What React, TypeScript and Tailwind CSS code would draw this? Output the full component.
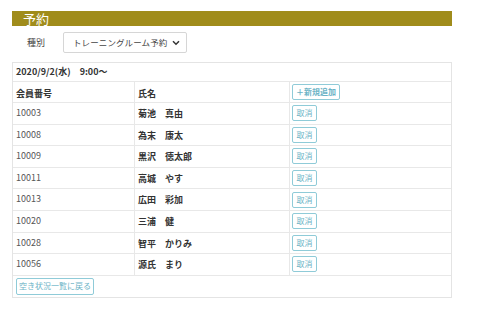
import React from 'react';

const members = [
  { id: '10003', name: '菊池　真由' },
  { id: '10008', name: '為末　康太' },
  { id: '10009', name: '黒沢　徳太郎' },
  { id: '10011', name: '高城　やす' },
  { id: '10013', name: '広田　彩加' },
  { id: '10020', name: '三浦　健' },
  { id: '10028', name: '智平　かりみ' },
  { id: '10056', name: '源氏　まり' },
];

const font = { fontFamily: '"Noto Sans CJK JP", "Noto Sans", sans-serif' };

const SmallButton: React.FC<{ label: string; width: string }> = ({ label, width }) => (
  <button
    className={`${width} h-4 flex items-center justify-center rounded-[2px] border border-[#8fcbd8] bg-white text-[8px] leading-none text-[#6cb3c6]`}
  >
    {label}
  </button>
);

export default function App() {
  return (
    <div className="w-[483px] h-[316px] bg-white text-[#333]" style={font}>
      <div className="pt-[11px] px-3">
        {/* title bar */}
        <div className="h-[15px] w-[440px] bg-[#a08c1b] pl-[11px] flex items-center">
          <span className="text-[13px] leading-none text-white">予約</span>
        </div>

        {/* type select */}
        <div className="flex items-center mt-[6px] h-[21px]">
          <span className="w-[51px] pl-[15px] text-[9px] text-[#444]">種別</span>
          <div className="w-[124px] h-[21px] flex items-center border border-[#d6d6d6] rounded-[2px] pl-[9px] pr-[6px]">
            <span className="text-[8.5px] text-[#444] tracking-[0.1px]">トレーニングルーム予約</span>
            <svg className="ml-auto" width="8" height="6" viewBox="0 0 8 6">
              <path d="M1 1.2 L4 4.2 L7 1.2" fill="none" stroke="#333" strokeWidth="1.5" />
            </svg>
          </div>
        </div>

        {/* table */}
        <div className="mt-[9px] w-[440px] border border-[#e4e4e4]">
          <div className="h-[19px] flex items-center pl-[3px] text-[9px] font-bold border-b border-[#e8e8e8]">
            2020/9/2(水)　9:00～
          </div>
          <div className="grid grid-cols-[122px_155px_161px] h-[21px] border-b border-[#e8e8e8] text-[9px] font-bold">
            <div className="flex items-center pl-[3px] border-r border-[#e8e8e8] pt-[3px]">会員番号</div>
            <div className="flex items-center pl-[3px] border-r border-[#e8e8e8] pt-[3px]">氏名</div>
            <div className="flex items-center pl-[2px]">
              <SmallButton label="＋新規追加" width="w-[48px]" />
            </div>
          </div>
          {members.map(m => (
            <div key={m.id} className="grid grid-cols-[122px_155px_161px] h-[21.6px] border-b border-[#e8e8e8] text-[9px]">
              <div className="flex items-center pl-[3px] border-r border-[#e8e8e8] text-[#555] pb-[1px]">{m.id}</div>
              <div className="flex items-center pl-[3px] border-r border-[#e8e8e8] font-bold text-[#333] pt-[1px]">{m.name}</div>
              <div className="flex items-center pl-[2px]">
                <SmallButton label="取消" width="w-[25px]" />
              </div>
            </div>
          ))}
          <div className="h-[21px] flex items-center pl-[3px]">
            <SmallButton label="空き状況一覧に戻る" width="w-[78px] h-[17px]" />
          </div>
        </div>
      </div>
    </div>
  );
}
